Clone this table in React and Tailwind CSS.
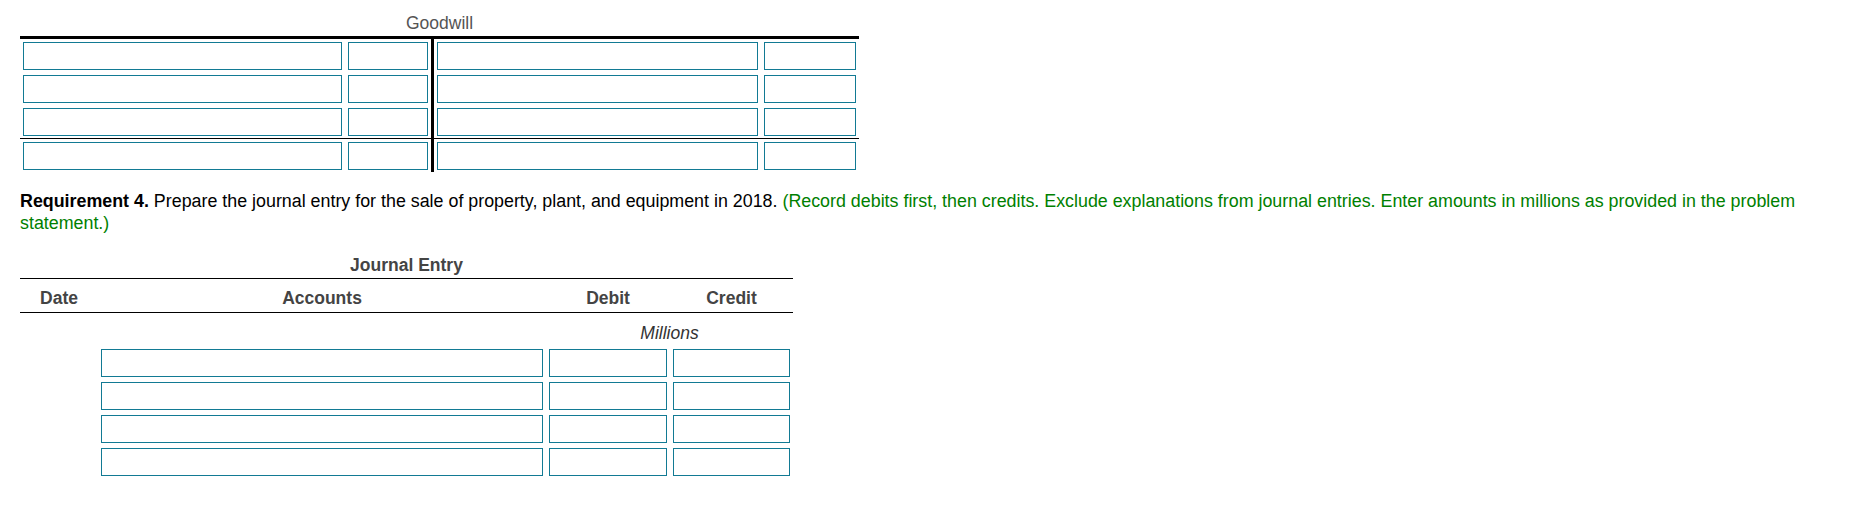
import React from "react";

const Box = () => <div className="h-[28px] w-full border border-[#127a94] bg-white" />;

const TRow = ({ divider = false }) => (
  <div className={divider ? "flex border-b border-black" : "flex"}>
    <div className="w-[325px] px-[3px] pt-[3px] pb-[2px]">
      <Box />
    </div>
    <div className="w-[89px] border-r-[3px] border-black px-[3px] pt-[3px] pb-[2px]">
      <Box />
    </div>
    <div className="w-[327px] px-[3px] pt-[3px] pb-[2px]">
      <Box />
    </div>
    <div className="w-[98px] px-[3px] pt-[3px] pb-[2px]">
      <Box />
    </div>
  </div>
);

const JRow = () => (
  <div className="flex">
    <div className="w-[78px]" />
    <div className="w-[448px] px-[3px] pt-[3px] pb-[2px]">
      <Box />
    </div>
    <div className="w-[124px] px-[3px] pt-[3px] pb-[2px]">
      <Box />
    </div>
    <div className="w-[123px] px-[3px] pt-[3px] pb-[2px]">
      <Box />
    </div>
  </div>
);

export default function App() {
  return (
    <div className="w-[1864px] h-[508px] overflow-hidden bg-white px-[20px] font-['Liberation_Sans',Arial,sans-serif]">
      {/* goodwill t-account */}
      <div className="w-[839px] pt-[13px]">
        <div className="text-center text-[17.5px] leading-[20px] text-[#555]">Goodwill</div>
        <div className="mt-[3px] border-t-[3px] border-black">
          <TRow />
          <TRow />
          <TRow divider />
          <TRow />
        </div>
      </div>

      {/* requirement */}
      <p className="mt-[18px] text-[17.85px] leading-[22px] text-black">
        <span className="font-bold">Requirement 4.</span> Prepare the journal entry for the sale of property, plant,
        and equipment in 2018.{" "}
        <span className="text-[#008000]">
          (Record debits first, then credits. Exclude explanations from journal entries. Enter amounts in millions as
          provided in the problem statement.)
        </span>
      </p>

      {/* journal entry table */}
      <div className="mt-[21px] w-[773px]">
        <div className="text-center text-[17.5px] font-bold leading-[20px] text-[#444]">Journal Entry</div>
        <div className="mt-[3px] flex border-y border-black pt-[9px] pb-[4px] text-[17.5px] font-bold leading-[20px] text-[#444]">
          <div className="w-[78px] text-center">Date</div>
          <div className="w-[448px] text-center">Accounts</div>
          <div className="w-[124px] text-center">Debit</div>
          <div className="w-[123px] text-center">Credit</div>
        </div>
        <div className="flex pt-[10px] pb-[3px]">
          <div className="w-[526px]" />
          <div className="w-[247px] text-center text-[17.5px] italic leading-[20px] text-[#333]">Millions</div>
        </div>
        <JRow />
        <JRow />
        <JRow />
        <JRow />
      </div>
    </div>
  );
}
